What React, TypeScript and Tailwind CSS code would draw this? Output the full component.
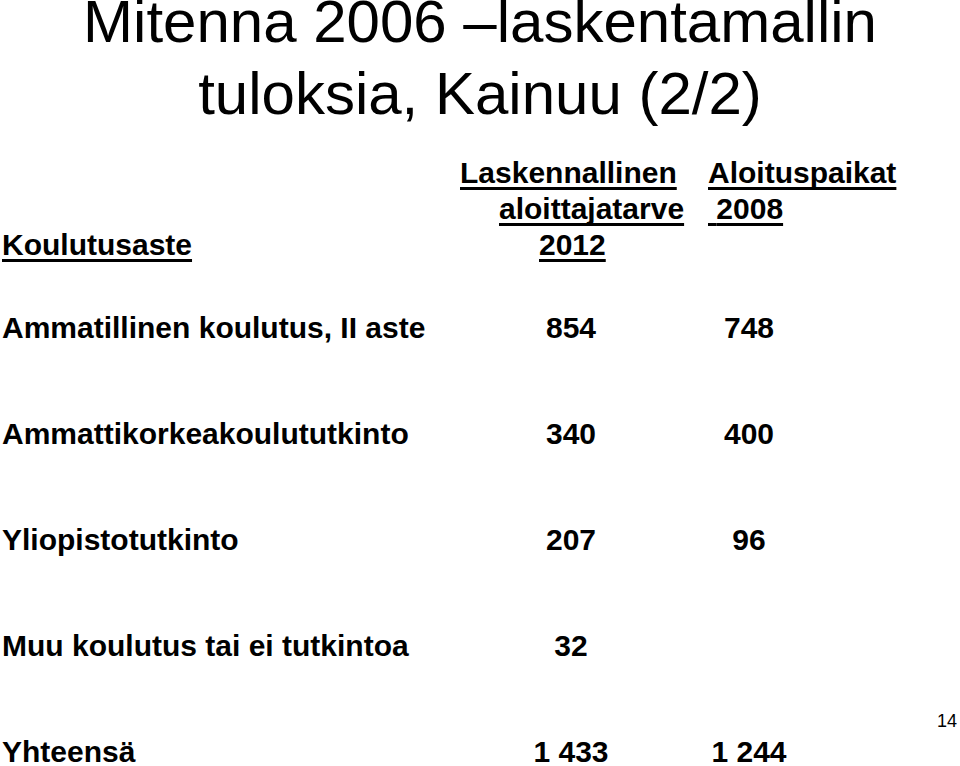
const rows = [
  { label: "Ammatillinen koulutus, II aste", need: "854", places: "748" },
  { label: "Ammattikorkeakoulututkinto", need: "340", places: "400" },
  { label: "Yliopistotutkinto", need: "207", places: "96" },
  { label: "Muu koulutus tai ei tutkintoa", need: "32", places: "" },
  { label: "Yhteensä", need: "1 433", places: "1 244" },
];

const ul = "underline decoration-[3px] underline-offset-[4px] [text-decoration-skip-ink:none]";

export default function App() {
  return (
    <div className="relative h-[766px] w-[960px] overflow-hidden bg-white text-black font-['Liberation_Sans',Arial,sans-serif]">
      {/* Title */}
      <h1 className="-mt-[14px] text-center text-[60px] leading-[72px] font-normal">
        Mitenna 2006 –laskentamallin
        <br />
        tuloksia, Kainuu (2/2)
      </h1>

      {/* Column headings */}
      <div className="mt-[25px] grid grid-cols-[440px_268px_1fr] text-[30px] font-bold leading-[36px]">
        <div className="flex flex-col justify-end pl-[2px]">
          <span className={ul}>Koulutusaste</span>
        </div>
        <div className="flex flex-col">
          <span className="pl-[20px]">
            <span className={ul}>Laskennallinen</span>
          </span>
          <span className="pl-[59px]">
            <span className={ul}>aloittajatarve</span>
          </span>
          <span className="pl-[99px]">
            <span className={ul}>2012</span>
          </span>
        </div>
        <div className="flex flex-col items-start">
          <span className={ul}>Aloituspaikat</span>
          <span className={ul}>{"\u00a0"}2008</span>
          <span>&nbsp;</span>
        </div>
      </div>

      {/* Data rows */}
      <div className="mt-[47px] flex flex-col gap-[70px] text-[30px] font-bold leading-[36px]">
        {rows.map((r) => (
          <div key={r.label} className="grid grid-cols-[482px_178px_178px]">
            <span className="pl-[2px] whitespace-nowrap">{r.label}</span>
            <span className="text-center">{r.need}</span>
            <span className="text-center">{r.places}</span>
          </div>
        ))}
      </div>

      {/* Slide number */}
      <span className="absolute right-[3px] top-[712px] text-[18px] leading-[18px]">14</span>
    </div>
  );
}
